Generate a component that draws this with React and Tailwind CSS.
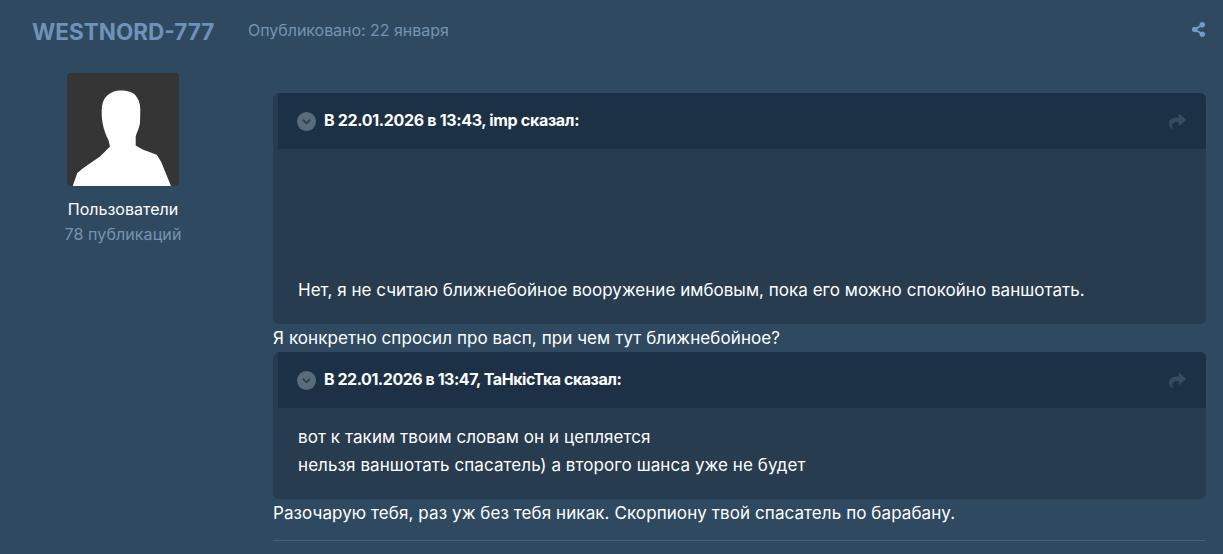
import { FaShareAlt, FaShare } from 'react-icons/fa';

function Quote({ title, titleClass, bodyClass, children }) {
  return (
    <div className="rounded-md overflow-hidden bg-[#283c50] border-l-[5px] border-[#283c50]">
      <div className="h-14 bg-[#1c3146] flex items-center pl-[19px] pr-5">
        <span className="w-[19px] h-[19px] rounded-full bg-[#5a6b7c] flex items-center justify-center">
          <svg width="11" height="11" viewBox="0 0 24 24" fill="none" stroke="#2b3d4f" strokeWidth="3.5" strokeLinecap="round" strokeLinejoin="round">
            <path d="M5 9l7 7 7-7" />
          </svg>
        </span>
        <span className={`ml-2 mb-0.5 text-[16px] font-bold text-white ${titleClass}`}>{title}</span>
        <FaShare className="ml-auto text-[17px] text-[#364b5e]" />
      </div>
      <div className={bodyClass}>{children}</div>
    </div>
  );
}

export default function App() {
  return (
    <div className="h-[554px] overflow-hidden bg-[#2f4a60] font-['Inter',sans-serif] text-[17px] tracking-[0.03px] leading-7 text-white">
      <div className="flex items-start pl-8 pr-[17px] pt-[18px] h-[73px]">
        <h2 className="w-[216px] text-[22.5px] font-bold leading-7 tracking-normal text-[#6e92ba]">WESTNORD-777</h2>
        <span className="text-base leading-6 tracking-[-0.04px] text-[#7593b3]">Опубликовано: 22 января</span>
        <FaShareAlt className="ml-auto mt-1 text-[15px] text-[#6f9bc9]" />
      </div>
      <div className="flex pr-[17px]">
        <div className="w-[246px] flex flex-col items-center tracking-normal">
          <div className="w-28 h-[113px] rounded-sm bg-[#353535] overflow-hidden">
            <svg width="112" height="113" viewBox="0 0 112 113">
              <path
                fill="#fff"
                d="M53.7 17.4C61 17.4 65 19 68 21.7c3.500 3.500 5.300 9 5.300 15L73 50c-.5 4.500-3 9-4.300 13.400V72.400L76.300 76.700 89.700 81.700 94 88.400 104 113H5.700L10.300 100 16.300 95 33 83.400 43 73.400 41.300 66.700C39 62 37.300 58 36.300 53.400 35 48 34.700 44 34.700 40 34.700 32 36 28 38 25c4-5 9-7.600 15.700-7.600z"
              />
            </svg>
          </div>
          <div className="mt-[11px] text-base leading-6 text-white">Пользователи</div>
          <div className="mt-px text-base leading-6 tracking-[0.1px] text-[#7593b3]">78 публикаций</div>
        </div>
        <div className="flex-1 ml-[27px] mt-5">
          <Quote title="В 22.01.2026 в 13:43, imp сказал:" titleClass="tracking-[-0.33px]" bodyClass="h-[175px] pl-5 pr-5 flex items-end pb-5">
            <p>Нет, я не считаю ближнебойное вооружение имбовым, пока его можно спокойно ваншотать.</p>
          </Quote>
          <p className="tracking-[0.085px]">Я конкретно спросил про васп, при чем тут ближнебойное?</p>
          <Quote title="В 22.01.2026 в 13:47, ТаНкісТка сказал:" titleClass="tracking-[-0.46px]" bodyClass="pl-5 pr-5 pt-[15px] pb-5 tracking-[0.08px]">
            <p>вот к таким твоим словам он и цепляется</p>
            <p>нельзя ваншотать спасатель) а второго шанса уже не будет</p>
          </Quote>
          <p className="tracking-[0.085px]">Разочарую тебя, раз уж без тебя никак. Скорпиону твой спасатель по барабану.</p>
          <div className="mt-[13px] border-t border-[#46617a]" />
        </div>
      </div>
    </div>
  );
}
